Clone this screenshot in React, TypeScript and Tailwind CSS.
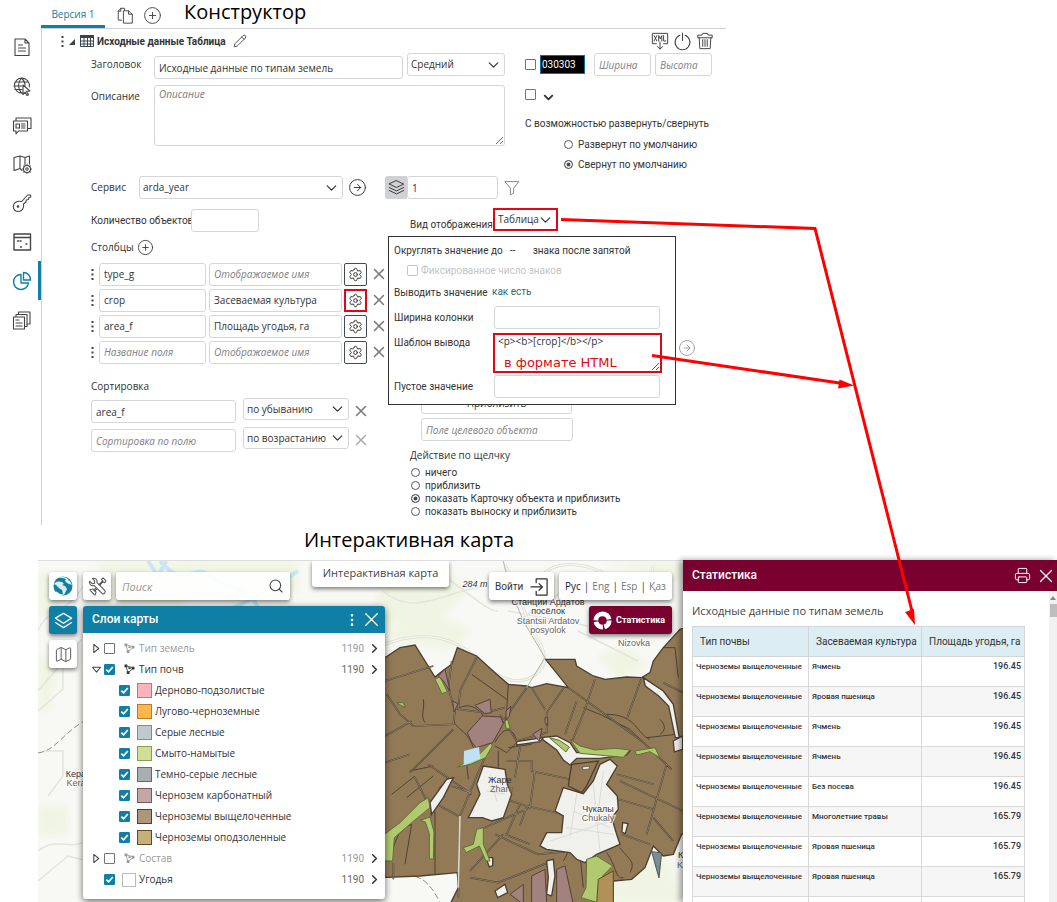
import React from 'react';
import {
  CirclePlus,
  Pencil,
  Power,
  ChevronDown,
  ChevronRight,
  CircleArrowRight,
  X,
  Search,
  Settings,
  Printer,
  Map as MapIcon,
  EllipsisVertical,
} from 'lucide-react';

const INPUT = 'h-[23px] min-w-0 rounded-[3px] border border-[#d4d6d9] bg-white px-[4px] text-[10px] text-[#333] outline-none placeholder:italic placeholder:text-[#7d8084]';
const MAP_BTN = 'flex h-[28px] w-[28px] shrink-0 items-center justify-center rounded-[3px] bg-white text-[#555] shadow-[0_2px_4px_rgba(0,0,0,0.5)]';

interface IconProps {
  children: React.ReactNode;
  size?: number;
  className?: string;
}

const Icon = ({ children, size = 20, className = '' }: IconProps) => (
  <svg
    width={size}
    height={size}
    viewBox="0 0 20 20"
    fill="none"
    stroke="currentColor"
    strokeWidth="1.1"
    strokeLinejoin="round"
    strokeLinecap="round"
    className={`shrink-0 ${className}`}
  >
    {children}
  </svg>
);

const Dots = () => (
  <svg width="3" height="11" viewBox="0 0 3 11" fill="#3c4350" className="shrink-0">
    <path d="M.5 0h2v2h-2zM.5 4.500h2v2h-2zM.5 9h2v2h-2z" />
  </svg>
);

interface SelectProps {
  label: string;
  value: string;
  className: string;
}

const Select = ({ label, value, className }: SelectProps) => (
  <div className={`relative ${className}`}>
    <select aria-label={label} className="h-full w-full appearance-none rounded-[3px] bg-transparent pr-[16px] pl-[3px] text-[10px] text-[#333] outline-none">
      <option>{value}</option>
    </select>
    <ChevronDown size={17} strokeWidth={1.700} className="pointer-events-none absolute top-1/2 right-[2px] -translate-y-1/2 text-[#333]" />
  </div>
);

const RemoveButton = ({ className = '' }: { className?: string }) => (
  <button aria-label="Удалить" className={`ml-[3px] shrink-0 ${className}`}>
    <X size={18} strokeWidth={2} />
  </button>
);

const Radio = ({ name, label, checked }: { name: string; label: string; checked?: boolean }) => (
  <label className="flex items-center gap-[5px]">
    <input
      type="radio"
      name={name}
      defaultChecked={checked}
      className="h-[9px] w-[9px] shrink-0 appearance-none rounded-full border border-[#555a63] bg-white checked:bg-[#444a54] checked:shadow-[inset_0_0_0_1.5px_white]"
    />
    {label}
  </label>
);

const Box = ({ label, checked }: { label: string; checked?: boolean }) => (
  <span className="relative flex h-[11px] w-[11px] shrink-0">
    <input
      type="checkbox"
      aria-label={label}
      defaultChecked={checked}
      className="peer h-[11px] w-[11px] appearance-none rounded-[1px] border border-[#6f747c] bg-white checked:border-[#0f7fa6] checked:bg-[#0f7fa6]"
    />
    <svg viewBox="0 0 11 11" fill="none" stroke="white" strokeWidth="1.7" className="pointer-events-none absolute inset-0 hidden h-[11px] w-[11px] peer-checked:block">
      <path d="M2.300 5.600 4.600 7.800 8.800 3" />
    </svg>
  </span>
);

const NAV = [
  {
    title: 'Документ',
    icon: <path d="M3 2h10l4 4v12.500H3zM13 2v4h4M6.500 8h4M6.500 11h7M6.500 14h7" />,
  },
  {
    title: 'Сервисы',
    icon: (
      <>
        <path d="M11 17A7.500 7.500 0 1 1 17.300 11M9.500 2c-4 4.500-4 10.500 0 15M9.500 2c3 3 3.800 5.500 3.500 8M3 6h13M2 10h8M3 13.500h7" />
        <path d="m11 9 7 6-3.500.300 2 3.500-1.500.800-1.800-3.400-2.200 2.300z" fill="white" />
      </>
    ),
  },
  {
    title: 'Карточки',
    icon: <path d="M1.500 6h14v10h-9l-2.500 3v-3h-2.500zM4 6V3h15v10.500h-3.500M4 9h3.500v4H4zM9.500 9H13M9.500 11H13M9.500 13H13" />,
  },
  {
    title: 'Карта',
    icon: (
      <>
        <path d="M10 16.500 8 14.500l-6 2v-13l6-1.500 5 1.500L17.500 2v8M8 2v12.500M13 3.500v7" />
        <circle cx="15" cy="15" r="3.500" />
        <circle cx="15" cy="15" r="1.200" />
        <path d="M15 10.500v1M15 18.500v1M10.500 15h1M18.500 15h1M11.800 11.800l.7.7M17.500 17.500l.7.7M18.200 11.800l-.7.7M12.500 17.500l-.7.7" />
      </>
    ),
  },
  {
    title: 'Доступ',
    icon: (
      <>
        <path d="M9.800 8.500 15.500 2h3l.3 2-2 .5-.3 2-2.300.5-.2 2-2.500 2c1 4.500-2 7.500-5.200 7.500-3 0-5-2.200-5-5 0-3.500 3.500-6 8.500-5z" />
        <circle cx="6" cy="13.500" r=".8" fill="currentColor" />
      </>
    ),
  },
  {
    title: 'Виджеты',
    icon: <path d="M2 2h16.500v16H2zM2 5.500h16.500M5.500 9h1M8 9h1M14 12h1M8.500 15h1" strokeWidth="1.400" />,
  },
  {
    title: 'Статистика',
    active: true,
    icon: <path d="M9 3.500A7.500 7.500 0 1 0 16.500 12H9zM11.500 1.500a7 7 0 0 1 7 7.500h-7z" strokeWidth="1.400" />,
  },
  {
    title: 'Отчёты',
    icon: <path d="M1.500 7h11v12h-11zM4 7V4.500h11v12h-2.500M6.500 4.500V2h11.500v12h-3M4 10h3M4 13h6M4 16h6" />,
  },
];

const FIELDS = [
  { name: 'type_g', title: '' },
  { name: 'crop', title: 'Засеваемая культура', marked: true },
  { name: 'area_f', title: 'Площадь угодья, га' },
  { name: '', title: '' },
];

const SOILS = [
  { name: 'Дерново-подзолистые', color: 'border-[#b9787d] bg-[#fbb4bb]' },
  { name: 'Лугово-черноземные', color: 'border-[#b57d26] bg-[#fdb54c]' },
  { name: 'Серые лесные', color: 'border-[#7f8d91] bg-[#c0cacd]' },
  { name: 'Смыто-намытые', color: 'border-[#87a04c] bg-[#cfe096]' },
  { name: 'Темно-серые лесные', color: 'border-[#62696d] bg-[#a7afb3]' },
  { name: 'Чернозем карбонатный', color: 'border-[#775a59] bg-[#c4a6a6]' },
  { name: 'Черноземы выщелоченные', color: 'border-[#54412c] bg-[#ae967b]' },
  { name: 'Черноземы оподзоленные', color: 'border-[#5f4b23] bg-[#c6b07a]' },
];

const CROPS = [
  ['Ячмень', '196.45'],
  ['Яровая пшеница', '196.45'],
  ['Ячмень', '196.45'],
  ['Ячмень', '196.45'],
  ['Без посева', '196.45'],
  ['Многолетние травы', '165.79'],
  ['Яровая пшеница', '165.79'],
  ['Яровая пшеница', '165.79'],
];

const ColumnPopup = () => (
  <div className="absolute top-[236px] left-[388px] z-10 flex h-[169px] w-[288px] flex-col border border-[#333] bg-white px-[5px] pt-[3px]">
    <label className="flex h-[20px] items-center font-['Roboto']">
      Округлять значение до
      <select className="mx-[7px] w-[16px] appearance-none text-[10px] outline-none">
        <option>--</option>
      </select>
      знака после запятой
    </label>
    <label className="ml-[13px] flex h-[20px] items-center gap-[3px] font-['Roboto'] text-[#c3c5c7]">
      <input type="checkbox" disabled className="h-[11px] w-[11px] appearance-none rounded-[2px] border border-[#c3c5c7]" />
      Фиксированное число знаков
    </label>
    <div className="flex h-[25px] items-center font-['Roboto']">
      <span className="w-[98px]">Выводить значение</span>
      <a href="#value" className="mb-[3px] text-[#2e6b7c]">как есть</a>
    </div>
    <label className="flex h-[25px] items-center font-['Roboto']">
      <span className="w-[100px] shrink-0">Ширина колонки</span>
      <input className={`${INPUT} w-[166px]`} />
    </label>
    <div className="mt-[3px] flex h-[41px]">
      <label htmlFor="template" className="w-[99px] shrink-0 pt-[2px] font-['Roboto']">Шаблон вывода</label>
      <div className="relative h-[40px] w-[169px] border-2 border-[#e30613]">
        <textarea id="template" defaultValue="<p><b>[crop]</b></p>" className="block h-full w-full px-[3px] text-[10px] leading-[13px] outline-none" />
        <span className="absolute bottom-0 left-[9px] font-['DejaVu_Sans'] text-[13px] leading-[17px] whitespace-nowrap text-[#e30613]">в формате HTML</span>
      </div>
    </div>
    <label className="flex h-[24px] items-center font-['Roboto']">
      <span className="w-[100px] shrink-0">Пустое значение</span>
      <input className={`${INPUT} w-[166px]`} />
    </label>
  </div>
);

const Constructor = () => (
  <section className="flex h-[525px] w-full max-w-[726px] shrink-0">
    <nav className="flex w-[41px] shrink-0 flex-col pt-[27px]">
      {NAV.map((item) => (
        <button
          key={item.title}
          title={item.title}
          className={`flex h-[39px] items-center border-r-[3px] pl-[12px] ${item.active ? 'border-[#0f7fa6] text-[#0f7fa6]' : 'border-transparent text-[#444]'}`}
        >
          <Icon>{item.icon}</Icon>
        </button>
      ))}
    </nav>

    <div className="flex min-w-0 flex-1 flex-col">
      <div className="flex h-[29px] shrink-0 border-b border-[#cfd1d4]">
        <button className="h-[28px] w-[64px] border-b-3 border-[#0f7fa6] pt-[3px] text-[10px] text-[#0f7fa6]">Версия 1</button>
        <button aria-label="Копировать" className="ml-[12px] text-[#444]">
          <Icon size={17} className="mt-[3px]">
            <path d="M5.500 15.500h-4V5l3-3.500H9V4M1.500 5h3V1.500M8 4.500h5.500L18 8.500v10.500H8zM13.500 4.500v4H18" />
          </Icon>
        </button>
        <button aria-label="Добавить" className="ml-[9px] text-[#444]">
          <CirclePlus size={19} strokeWidth={1.200} className="mt-[2px]" />
        </button>
        <h2 className="ml-[22px] h-[28px] text-[20px] leading-[24px] text-black">Конструктор</h2>
      </div>

      <div className="flex min-h-0 flex-1 flex-col border-l border-[#cfd1d4] pl-[19px]">
        <div className="flex h-[24px] shrink-0 items-center">
          <Dots />
          <svg width="7" height="7" viewBox="0 0 7 7" className="mt-[3px] ml-[5px] shrink-0"><path d="M6 0v6H0z" fill="#3c4350" /></svg>
          <svg width="14" height="12" viewBox="0 0 14 12" fill="none" stroke="#3c4350" className="ml-[4px] shrink-0">
            <path d="M.5.500h13v11H.5zM.5 6h13M.5 9h13M4 3v8.500M7.500 3v8.500M10.500 3v8.500" />
            <path d="M0 1.500h14" strokeWidth="3" />
          </svg>
          <h3 className="ml-[3px] font-['Roboto'] text-[10px] font-bold text-[#333]">Исходные данные Таблица</h3>
          <button aria-label="Переименовать" className="ml-[7px]"><Pencil size={14} strokeWidth={1.400} /></button>
          <div className="mr-[12px] ml-auto flex items-center gap-[4px] text-[#444]">
            <button aria-label="Экспорт XML">
              <Icon size={18}>
                <path d="M6 13H1.500V1.500h17V13H14M10 11v8M7 16l3 3 3-3" />
                <path d="m3.500 4 3 6M6.500 4l-3 6M8.500 10V4l1.800 3.500L12 4v6M14 4v6h2.500" />
              </Icon>
            </button>
            <button aria-label="Отключить">
              <Icon size={19}><path d="M7.300 3.500a7.800 7.800 0 1 0 5.400 0M10 1v8" /></Icon>
            </button>
            <button aria-label="Удалить">
              <Icon size={18}>
                <path d="M2 6V3.500h4.500l1-2h5l1 2H18V6zM3.500 6l.8 12.500h11.400L16.500 6M7.500 8.500v7.500M10 8.500v7.500M12.500 8.500v7.500" />
              </Icon>
            </button>
          </div>
        </div>

        <div className="flex shrink-0 pl-[30px]">
          <div className="w-[414px] shrink-0">
            <div className="flex">
              <label htmlFor="title" className="w-[63px] shrink-0 pt-[4px]">Заголовок</label>
              <input id="title" defaultValue="Исходные данные по типам земель" className={`${INPUT} mt-[3px] w-[249px]`} />
              <Select label="Размер" value="Средний" className="ml-[4px] h-[23px] w-[98px] rounded-[3px] border border-[#d4d6d9]" />
            </div>
            <div className="mt-[6px] flex">
              <label htmlFor="about" className="w-[63px] shrink-0 pt-[4px]">Описание</label>
              <textarea id="about" placeholder="Описание" className="h-[61px] w-[351px] rounded-[3px] border border-[#d4d6d9] px-[4px] py-[1px] text-[10px] outline-none placeholder:text-[#777] placeholder:italic" />
            </div>
          </div>

          <div className="ml-[20px] flex-1">
            <div className="flex items-center">
              <Box label="Цвет" />
              <input aria-label="Код цвета" defaultValue="030303" className="ml-[4px] h-[19px] w-[45px] border border-[#0f6f94] bg-black px-px font-['Roboto'] text-[10px] text-white outline-none" />
              <input aria-label="Ширина" placeholder="Ширина" className={`${INPUT} ml-[9px] w-[57px]`} />
              <input aria-label="Высота" placeholder="Высота" className={`${INPUT} ml-[4px] w-[57px]`} />
            </div>
            <div className="mt-[8px] flex items-center gap-[5px]">
              <Box label="Сворачивать" />
              <ChevronDown size={15} strokeWidth={3} className="mt-[6px]" />
            </div>
            <p className="mt-[11px] font-['Roboto'] whitespace-nowrap">С возможностью развернуть/свернуть</p>
            <div className="mt-[6px] ml-[39px] flex flex-col gap-[5px] font-['Roboto'] whitespace-nowrap">
              <Radio name="fold" label="Развернут по умолчанию" />
              <Radio name="fold" label="Свернут по умолчанию" checked />
            </div>
          </div>
        </div>

        <div className="mt-[4px] flex shrink-0 items-center pl-[30px]">
          <span className="w-[48px] shrink-0">Сервис</span>
          <Select label="Сервис" value="arda_year" className="h-[23px] w-[204px] rounded-[3px] border border-[#d4d6d9]" />
          <button aria-label="Открыть сервис" className="ml-[5px]"><CircleArrowRight size={19} strokeWidth={1.200} /></button>
          <button aria-label="Слои" className="ml-[18px] flex h-[23px] w-[22px] items-center justify-center rounded-l-[3px] bg-[#cfd1d5]">
            <Icon size={17}>
              <path d="m10 2 8.500 4L10 10 1.500 6zM1.500 10l8.500 4 8.500-4M1.500 13.500l8.500 4 8.500-4" />
            </Icon>
          </button>
          <input aria-label="Слой" defaultValue="1" className={`${INPUT} w-[91px]`} />
          <button aria-label="Фильтр" className="ml-[6px] text-[#777]">
            <Icon size={16}><path d="M1.500 2h17l-6.500 8.500v6l-4 2v-8z" /></Icon>
          </button>
        </div>

        <div className="flex pl-[30px]">
          <div className="w-[319px] shrink-0">
            <label className="mt-[10px] flex h-[23px] items-center font-['Roboto'] whitespace-nowrap">
              <span className="w-[100px] shrink-0">Количество объектов</span>
              <input className={`${INPUT} w-[68px]`} />
            </label>
            <div className="mt-[5px] flex h-[20px] items-center gap-[3px]">
              Столбцы
              <button aria-label="Добавить столбец"><CirclePlus size={17} strokeWidth={1.200} /></button>
            </div>
            <div className="mt-[6px] flex flex-col gap-[4px]">
              {FIELDS.map((field, i) => (
                <div key={i} className="flex h-[22px] items-center">
                  <Dots />
                  <input aria-label="Название поля" placeholder="Название поля" defaultValue={field.name} className={`${INPUT} ml-[5px] w-[107px]`} />
                  <input aria-label="Отображаемое имя" placeholder="Отображаемое имя" defaultValue={field.title} className={`${INPUT} ml-[3px] w-[133px]`} />
                  <button
                    aria-label="Настройки"
                    className={`ml-[2px] flex h-[23px] w-[23px] shrink-0 items-center justify-center ${field.marked ? 'border-2 border-[#e30613]' : 'rounded-[2px] border border-[#444a54]'}`}
                  >
                    <Settings size={15} strokeWidth={1.600} />
                  </button>
                  <RemoveButton className="text-[#74777b]" />
                </div>
              ))}
            </div>
            <p className="mt-[16px]">Сортировка</p>
            <div className="mt-[4px] flex flex-col gap-[4px]">
              <div className="flex">
                <input aria-label="Поле сортировки" defaultValue="area_f" className={`${INPUT} mt-[2px] w-[145px]`} />
                <Select label="Порядок" value="по убыванию" className="ml-[7px] h-[22px] w-[106px] rounded-[3px] border border-[#d4d6d9]" />
                <RemoveButton className="text-[#74777b]" />
              </div>
              <div className="flex">
                <input aria-label="Сортировка по полю" placeholder="Сортировка по полю" className={`${INPUT} mt-[2px] w-[145px]`} />
                <Select label="Порядок" value="по возрастанию" className="ml-[7px] h-[22px] w-[106px] rounded-[3px] border border-[#d4d6d9]" />
                <RemoveButton className="text-[#a9abae]" />
              </div>
            </div>
          </div>

          <div className="flex flex-1 flex-col pt-[9px] whitespace-nowrap">
            <div className="flex">
              <span className="w-[83px] pt-[9px] font-['Roboto']">Вид отображения</span>
              <Select label="Вид отображения" value="Таблица" className="h-[23px] w-[65px] border-2 border-[#e30613]" />
            </div>
            <button aria-label="Перейти" className="mt-[107px] ml-[268px] h-[18px] w-[18px] text-[#999]"><CircleArrowRight size={18} strokeWidth={1.200} /></button>
            <input aria-label="Приближение" defaultValue="Приблизить" className={`${INPUT} mt-[34px] ml-[11px] w-[151px] text-center`} />
            <input aria-label="Поле целевого объекта" placeholder="Поле целевого объекта" className={`${INPUT} mt-[4px] ml-[11px] w-[152px]`} />
            <p className="mt-[7px]">Действие по щелчку</p>
            <div className="mt-[3px] ml-[1px] flex flex-col font-['Roboto'] leading-[13px]">
              <Radio name="click" label="ничего" />
              <Radio name="click" label="приблизить" />
              <Radio name="click" label="показать Карточку объекта и приблизить" checked />
              <Radio name="click" label="показать выноску и приблизить" />
            </div>
          </div>
        </div>
      </div>
    </div>
  </section>
);

const FIELD_ROADS =
  'M15 390l145-45M215 330l-10 80 20 70-5 40-120 5-40-35-40-60M290 320l-50 100-5 55 80 10 60-15M440 410l-70 100-40 75-40 90-50 120-5 245M555 405l-55 80 0 60-90 25-50-80M455 410l40 65M565 410l220 160 90 85M15 555l80-45M90 665l130-130M145 640l130 90M105 680l30 60 100 55M290 840l160-70 15-110M375 850l75 30M860 640l-60 210M720 690l190 90M820 800l60 70M270 960l100-110M40 935v50M0 640l90-30M150 800l30-90 40-30M850 395l60 30M645 385l-30 90-40 100M590 450l-35 100M785 380l-43 120M270 980l85 15 150-60M380 630l75 0 0 30 115 25M380 745l60 20 110 25M420 760l-40 90M440 765l-20 60M345 850l130 60 100-10M715 745l105 30M710 670l110 30M725 850l85 30M405 680l15-90M215 705l60 20';

// Base map and field parcels; the parcel group is drawn on a 3x grid.
const MapCanvas = () => (
  <svg viewBox="0 0 645 342" preserveAspectRatio="xMinYMin slice" className="absolute inset-0 h-full w-full bg-[#f8f8f5] font-['Liberation_Sans']">
    <defs>
      <filter id="soft"><feGaussianBlur stdDeviation="3" /></filter>
    </defs>
    <g fill="#f0f5e3" filter="url(#soft)">
      <path d="M60 0h90l20 20-30 25H70zM0 10l30 15-10 30H0zM0 90l20 20-8 40H0zM0 245h30v30H0zM150 0h110v30l-60 12zM350 10l50-10 30 30-40 40-60-10z" />
      <path d="M345 70l60-15 30 15-20 20-60-10zM560 0h85v20zM560 95l30-10 20 20-30 15zM570 320l60-25 15 47h-70z" />
    </g>
    <g fill="none" stroke="#c8e6f7" strokeWidth="4">
      <path d="M110 0l10 15 8-15M122 0c25 30 35 0 50 15s45 8 50 40M185 50c20-5 50-25 75-40" />
    </g>
    <g fill="none" stroke="#e4e4de" strokeWidth="1.500">
      <path d="M0 150l25-22v-40M0 70c10-25 28-15 45-45M5 190h20v25l-15 20M0 290c20-15 30 0 48-10M0 130l44-52M0 320l30-25 20 5M345 30c40 35 80-20 130 0M400 12c20 10 50 40 60 38M480 60l60-40M470 50l80 15M540 70l60 30" />
      <path d="M342 85c50-20 80-5 100 15s40 25 55 14 10-25 0-40-15-45-30-70M500 20c15-25 55-20 85 5s25 5 30-20" stroke="#dcdfd0" strokeWidth="3" />
      <path d="M342 85c50-20 80-5 100 15s40 25 55 14 10-25 0-40-15-45-30-70M500 20c15-25 55-20 85 5s25 5 30-20" stroke="#f6f6ee" />
    </g>
    <path d="M0 192c18-3 22-17 46-32M350 316c20 0 35-10 52 26" fill="none" stroke="#8c8c8c" strokeDasharray="6 3" />

    <g transform="translate(342 -10) scale(.3333)">
      <path
        d="M0 330 60 290 105 282 165 378 190 358 215 340 232 290 290 315 345 365 385 400 440 405 455 410 500 398 565 410 497 325 585 325 590 345 640 375 675 385 740 378 785 380 810 365 820 330 850 290 900 235 950 220 950 830 905 850 880 910 850 915 820 885 795 950 755 985 700 990V1060H210L235 1010 232 965 120 975 0 980z"
        fill="#937a57"
        stroke="#4b3f30"
        strokeWidth="4"
      />
      <g fill="none" stroke="#41372b" strokeWidth="2.500">
        <path d="M275 370l105 75M130 445c5 30-10 50 5 70M385 400l-5 80M610 470l50 20 90 45 40 40M680 490c90 0 90 60 130 75M850 290l35 0 10 90M840 505c20 20 15 35 0 45M800 560l90-10M35 730l70-55M80 740l80-65M90 660l70-15M40 890c20-60 30-60 55-70M95 820l-20 120M165 780l0 190M260 640l5 45M550 930c20-30 10-40 40-40M600 910l10 100M680 905c30 40 25 80 50 75M720 890c20 30 50 40 30 75M355 600l0 50M230 475c30-20 60-10 80 20M220 510c20 35 40 25 60 80M345 575c30-60 60-40 65 0l-30 30-35-20M385 590l70-10" />
      </g>
      <path d={FIELD_ROADS} fill="none" stroke="#463b2d" strokeWidth="5" />
      <path d={FIELD_ROADS} fill="none" stroke="#ab9c82" strokeWidth="2" />
      <path d="M240 795l-5 215" fill="none" stroke="#dcd8ce" strokeWidth="5" />

      <g fill="#f0f0ec" stroke="#4b3f30" strokeWidth="4">
        <path d="m310 645 65 10 7 45 13 30-25 70-35 10-28-10-42 0 35-70-10-30z" />
        <path d="m550 710 60 18 30-38 20-50 30-15 22 20-32 55 32 35 3 40-20 25 15 50 10 30-70 30-35 25-25-10-20-20-70-10-20-10 20-40h45l5-50-25-15z" />
        <path d="m480 560 50-5 40 20 20 30 110-2 50-3-10 12-80 10-70 0-20 20-20-15-20-30z" />
        <path d="M610 648l18-2v8l-18 2zM728 815l16 3-8 30-10-5zM880 570l28-15v40l-25 8zM500 930l20-5 5 50-10 60-15-5 5-50zM790 380l60 40 30 40 18 100-12 0-20-95-30-30-40-30zM345 1020l30-20 8 25-30 15zM318 920l20 0v24l-10 4zM150 755l50-70 20-5-30 60-35 50zM410 572l80-12-10 12-70 10z" />
      </g>
      <g fill="#b1ca70" stroke="#5d6f35" strokeWidth="3">
        <path d="m165 385 15-8 22 45-16 6zM0 860l60-45 60-60 25-15 5 30-55 45-52 45-5 70H0zM120 808l30-10 12 45-2 82-12-2 0-75-12-35zM298 610l35-35 4 10-20 35-45 20-40 8zM570 565l30 20 45 12 60-5 45 5-20 22-130-12zM508 560l30 8 30 20-10 15zM765 600l60-10 15 30-30-18-40 10zM375 510l8-5 8 30-14-5zM620 925l30-10 48 30-30 30-15 80-50-15 15-30zM50 455l20 0 5 15zM250 890l30-10 10-45 20-5 0 50 20 50-12 0-20-45-40 20z" />
      </g>
      <g fill="#a2827d" stroke="#554039" strokeWidth="3">
        <path d="m262 545 45-50 55 3 8 20-32 57-50 15-15-20zM285 463l45-18 4 40-20 3zM175 375l20-20 15 65-20-30zM218 450l16 8-12 25zM378 480l15-15-5 30-10 12zM458 550l28-18-8 38zM495 500l8 0v25l-8-12zM455 975l40-20 5 101h-45zM530 955l25-10 25 115h-50zM390 1030l40-30v60z" />
      </g>
      <path d="m252 600 45-12 4 35-50 20z" fill="#bfe1f3" />
      <path d="m655 985 45-25v100h-50z" fill="#b09157" stroke="#5f4b23" strokeWidth="3" />
      <path d="m815 902 30 4-8 75z" fill="#7d8b93" stroke="#4d565b" strokeWidth="3" />
      <path d="M575 640l80-10-35 75-15 20-40-20z" fill="#937a57" stroke="#4b3f30" strokeWidth="4" />
      <path d="M608 648l20-2v8l-20 2z" fill="#f0f0ec" stroke="#4b3f30" strokeWidth="2" />

      <g fill="none" stroke="#dcdcd7" strokeWidth="3">
        <path d="M330 670l20 80M320 720l55 10M590 730l-20 130M640 700l20 200M670 660l-20 160M560 830l140 20M580 780l110 50M510 870l180-60" />
      </g>
      <path d="M370 30c20 90 40 130 60 180l65 110-55 90" fill="none" stroke="#b2b2ae" strokeWidth="3" />
    </g>

    <g fill="#333" fontSize="9" textAnchor="middle" stroke="white" strokeWidth="2.500" strokeOpacity=".7" paintOrder="stroke">
      <text x="510" y="44">Станции Ардатов</text>
      <text x="510" y="53">посёлок</text>
      <text x="510" y="63" fill="#666">Stantsii Ardatov</text>
      <text x="510" y="72" fill="#666">posyolok</text>
      <text x="596" y="85" fill="#666">Nizovka</text>
      <text x="437" y="26" fontStyle="italic">284 m</text>
      <text x="560" y="251">Чукалы</text>
      <text x="560" y="260" fill="#666">Chukaly</text>
      <text x="645" y="297">Ке</text>
      <text x="642" y="307" fill="#666">K</text>
      <text x="38" y="216">Кера</text>
      <text x="38" y="225" fill="#666">Kera</text>
    </g>
    <g fill="#333" fontSize="9">
      <text x="450" y="222">Жаре</text>
      <text x="452" y="231" fill="#666">Zhare</text>
    </g>
  </svg>
);

const Poly = () => (
  <Icon size={11}>
    <path d="M3 3l14 4M4 5l3 10M8 15l9-7" strokeWidth="1.500" />
    <path d="M1 1h5v5H1zM14 5h5v5h-5zM5 13h5v5H5zM8 6h4v3H8z" fill="currentColor" stroke="none" />
  </Icon>
);

interface LayerProps {
  name: string;
  checked?: boolean;
  arrow?: 'open' | 'closed';
  group?: boolean;
}

const LayerRow = ({ name, checked, arrow, group }: LayerProps) => (
  <li className={`flex h-[21px] items-center pr-[3px] pl-[9px] ${checked ? 'text-[#333]' : 'text-[#999]'}`}>
    <button aria-label="Развернуть" className="flex w-[12px] text-[#444]">
      {arrow && (
        <Icon size={9}>{arrow === 'open' ? <path d="M1 5h18l-9 11z" strokeWidth="2.300" /> : <path d="M4 1v18L15 10z" strokeWidth="2.300" />}</Icon>
      )}
    </button>
    <Box label={name} checked={checked} />
    {group ? <span className="mr-[3px] ml-[9px] flex w-[12px]"><Poly /></span> : <span className="mr-[3px] ml-[7px] h-[14px] w-[14px] border border-[#bbb]" />}
    <span className="flex-1">{name}</span>
    <span className={`font-['Roboto'] ${checked ? 'text-[#666]' : 'text-[#999]'}`}>1190</span>
    <ChevronRight size={15} strokeWidth={2.300} className="ml-[3px] text-[#333]" />
  </li>
);

const LayersPanel = () => (
  <div className="w-[302px] overflow-hidden rounded-[3px] bg-white pb-[9px] shadow-[0_2px_7px_rgba(0,0,0,0.6)]">
    <div className="flex h-[27px] items-center bg-[#107fa5] pr-[2px] pl-[9px] text-white">
      <h3 className="flex-1 font-['Roboto'] text-[12px] font-medium">Слои карты</h3>
      <button aria-label="Меню"><EllipsisVertical size={16} /></button>
      <button aria-label="Закрыть"><X size={23} strokeWidth={1.300} /></button>
    </div>
    <ul className="pt-[5px]">
      <LayerRow name="Тип земель" arrow="closed" group />
      <LayerRow name="Тип почв" arrow="open" checked group />
      {SOILS.map((soil) => (
        <li key={soil.name} className="flex h-[21px] items-center pl-[36px] text-[#333]">
          <Box label={soil.name} checked />
          <span className={`mr-[3px] ml-[7px] h-[15px] w-[15px] border ${soil.color}`} />
          {soil.name}
        </li>
      ))}
      <LayerRow name="Состав" arrow="closed" group />
      <LayerRow name="Угодья" checked />
    </ul>
  </div>
);

const MapView = () => (
  <div className="relative min-w-0 flex-1 overflow-hidden border-t border-[#ddd]">
    <MapCanvas />
    <div className="relative px-[11px]">
      <div className="flex items-start">
        <button aria-label="Главная" className={`${MAP_BTN} mt-[11px]`}>
          <svg width="20" height="20" viewBox="0 0 20 20">
            <circle cx="10" cy="10" r="9.500" fill="#107fa5" />
            <path d="M1 8c2-3 5-3 8-2l2 2-2 1 3 1 2 3-3 6c-2-1-1-4-2-5S5 12 4 10s-2-1-3-2zM13 3l4 2 2 4-3-1-2-1-2-2z" fill="white" opacity=".85" />
            <path d="M6 1c4 0 7 1 9 3M3 16c2 2 4 3 7 3" fill="none" stroke="white" strokeWidth="1.200" />
          </svg>
        </button>
        <button aria-label="Инструменты" className={`${MAP_BTN} mt-[11px] ml-[6px]`}>
          <Icon size={19}>
            <path d="M1.500 4.500l3 2.500L7 6.500V4L4.500 1.500C7.500.5 10 2.500 9.500 6l8 8c2 2-1 5-3 3l-8-8C3.500 9.800 1 7.500 1.500 4.500z" />
            <path d="M12 7.500 15.500 4 14 2.500 16 1l3 3-1.500 2L16 5l-3.500 3.500M8 12l-2 2M9 13l-2 2M2 13.500l3-1 3.500 3.500-1 3M2 13.500 6.500 18.500" />
          </Icon>
        </button>
        <label className="mt-[11px] ml-[5px] flex h-[28px] w-[174px] min-w-0 items-center rounded-[3px] bg-white/90 px-[6px] shadow-[0_2px_4px_rgba(0,0,0,0.5)]">
          <input aria-label="Поиск" placeholder="Поиск" className="min-w-0 flex-1 text-[11px] outline-none placeholder:text-[#999] placeholder:italic" />
          <Search size={16} strokeWidth={1.600} className="-scale-x-100 -rotate-90 text-[#444]" />
        </label>
        <h1 className="ml-[22px] h-[26px] w-[137px] shrink-0 rounded-b-[3px] bg-white text-center text-[11px] leading-[24px] text-[#444] shadow-[0_2px_4px_rgba(0,0,0,0.5)]">
          Интерактивная карта
        </h1>
        <button className="mt-[11px] ml-auto flex h-[28px] w-[65px] shrink-0 items-center justify-between rounded-[3px] bg-white px-[6px] font-['Roboto'] text-[10px] text-[#333] shadow-[0_2px_4px_rgba(0,0,0,0.5)]">
          Войти
          <Icon size={19} className="-mr-px"><path d="M6.500 6V2H18v17H6.500v-4M1 10.500h12M9.500 7l3.500 3.500L9.500 14" strokeWidth="1.300" /></Icon>
        </button>
        <div className="mt-[11px] ml-[5px] flex h-[28px] w-[113px] shrink-0 items-center justify-between rounded-[3px] bg-white px-[6px] text-[10px] text-[#777] shadow-[0_2px_4px_rgba(0,0,0,0.5)]">
          <a href="#ru" className="text-[#222]">Рус</a>
          <span className="text-[#333]">|</span>
          <a href="#en">Eng</a>
          <span className="text-[#333]">|</span>
          <a href="#es">Esp</a>
          <span className="text-[#333]">|</span>
          <a href="#kz">Қаз</a>
        </div>
      </div>

      <div className="mt-[6px] flex items-start">
        <div className="flex flex-col gap-[6px]">
          <button aria-label="Слои карты" className="flex h-[28px] w-[28px] items-center justify-center rounded-[3px] bg-[#107fa5] text-white shadow-[0_2px_4px_rgba(0,0,0,0.5)]">
            <Icon size={19}><path d="m10 2.500 8.500 5-8.500 5.500-8.500-5.500zM1.500 12l8.500 5.500 8.500-5.500" strokeWidth="1.300" /></Icon>
          </button>
          <button aria-label="Базовая карта" className={MAP_BTN}><MapIcon size={19} strokeWidth={1.200} /></button>
        </div>
        <div className="ml-[6px]"><LayersPanel /></div>
        <button className="ml-auto flex h-[28px] w-[83px] items-center gap-[4px] rounded-[3px] bg-[#7a0030] pl-[4px] font-['Roboto'] text-[9px] font-bold text-white shadow-[0_2px_4px_rgba(0,0,0,0.5)]">
          <svg width="19" height="19" viewBox="0 0 20 20" fill="none" stroke="white" strokeWidth="5">
            <circle cx="10" cy="10" r="7" strokeDasharray="9 1.500 10 1.500 20.500 1.500" />
          </svg>
          Статистика
        </button>
      </div>
    </div>
  </div>
);

const StatsPanel = () => (
  <aside className="relative flex w-[374px] shrink-0 flex-col bg-white shadow-[-3px_0_6px_rgba(0,0,0,0.4)]">
    <header className="flex h-[31px] shrink-0 items-center bg-[#7a0030] pl-[9px] text-white">
      <h2 className="flex-1 font-['Roboto'] text-[12px] font-medium">Статистика</h2>
      <button aria-label="Печать"><Printer size={17} strokeWidth={1.400} /></button>
      <button aria-label="Закрыть" className="ml-[4px]"><X size={22} strokeWidth={1.400} /></button>
    </header>
    <div className="flex min-h-0 flex-1">
      <div className="min-w-0 flex-1 overflow-hidden pl-[9px]">
        <h3 className="pt-[12px] pb-[7px] text-[11px] leading-[16px] text-[#444]">Исходные данные по типам земель</h3>
        <table className="w-[333px] table-fixed border-collapse font-['Roboto'] text-[10px] text-[#333]">
          <thead>
            <tr className="h-[30px] bg-[#dcedf3]">
              <th className="w-[116px] border border-[#d3d6d8] pl-[7px] text-left font-normal">Тип почвы</th>
              <th className="w-[113px] border border-[#d3d6d8] pl-[7px] text-left font-normal whitespace-nowrap">Засеваемая культура</th>
              <th className="border border-[#d3d6d8] pl-[7px] text-left font-normal whitespace-nowrap">Площадь угодья, га</th>
            </tr>
          </thead>
          <tbody className="text-[8px] font-medium">
            {CROPS.map(([crop, area], i) => (
              <tr key={i} className="h-[30px] align-top even:bg-[#f6f6f6]">
                <td className="border border-[#d8d8d8] pt-[2px] pl-[3px] whitespace-nowrap">Черноземы выщелоченные</td>
                <td className="border border-[#d8d8d8] pt-[2px] pl-[3px] whitespace-nowrap">{crop}</td>
                <td className="border border-[#d8d8d8] pt-[2px] pr-[3px] text-right text-[9px]">{area}</td>
              </tr>
            ))}
            <tr className="h-[30px]">
              <td className="border border-[#d8d8d8]" />
              <td className="border border-[#d8d8d8]" />
              <td className="border border-[#d8d8d8]" />
            </tr>
          </tbody>
        </table>
      </div>
      <div className="flex w-[8px] flex-col items-center bg-[#f1f1f1] pt-[5px]">
        <svg width="6" height="4" viewBox="0 0 6 4"><path d="M0 4h6L3 0z" fill="#888" /></svg>
        <span className="mt-[4px] h-[13px] w-[7px] bg-[#bdbdbd]" />
      </div>
    </div>
  </aside>
);

export default function App() {
  return (
    <div className="relative flex h-screen flex-col overflow-hidden bg-white font-['Open_Sans',sans-serif] text-[10px] leading-[15px] text-[#333]">
      <Constructor />
      <ColumnPopup />
      <h2 className="h-[35px] shrink-0 pl-[304px] text-[20px] leading-[29px] text-black">Интерактивная карта</h2>
      <div className="flex min-h-0 flex-1 pl-[38px]">
        <MapView />
        <StatsPanel />
      </div>

      <svg width="1057" height="902" viewBox="0 0 1057 902" fill="none" stroke="#fe0000" strokeWidth="3" className="pointer-events-none absolute top-0 left-0 z-20">
        <path d="M561 219.500 815 228.500 913 615M652 355.500 843 383.500" />
        <path d="m915 625-10-13 9-3zM854 385.500l-16 3 1.500-9z" fill="#fe0000" stroke="none" />
      </svg>
    </div>
  );
}
